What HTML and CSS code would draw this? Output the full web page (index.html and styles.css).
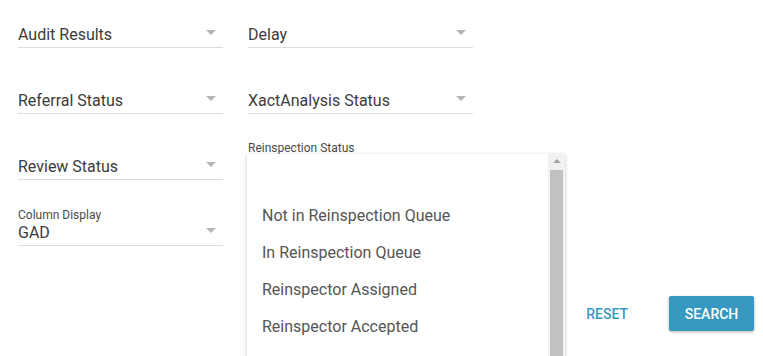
FILE: index.html
```html
<!DOCTYPE html>
<html>
<head>
    <title>Search filters</title>
    <meta charset="UTF-8">
    <meta name="viewport" content="width=device-width, initial-scale=1">
    <link rel="stylesheet" href="styles.css">
</head>
<body>
    <div class="filters">
        <div class="grid">
            <div class="field">
                <span class="value">Audit Results</span>
                <span class="caret"></span>
            </div>
            <div class="field wide">
                <span class="value">Delay</span>
                <span class="caret"></span>
            </div>
            <div class="field">
                <span class="value">Referral Status</span>
                <span class="caret"></span>
            </div>
            <div class="field wide">
                <span class="value">XactAnalysis Status</span>
                <span class="caret"></span>
            </div>
            <div class="field">
                <span class="value">Review Status</span>
                <span class="caret"></span>
            </div>
            <div class="field wide open">
                <label class="label">Reinspection Status</label>
                <div class="menu">
                    <ul class="options">
                        <li></li>
                        <li>Not in Reinspection Queue</li>
                        <li>In Reinspection Queue</li>
                        <li>Reinspector Assigned</li>
                        <li>Reinspector Accepted</li>
                    </ul>
                    <div class="scrollbar">
                        <span class="up"></span>
                        <span class="thumb"></span>
                    </div>
                </div>
            </div>
            <div class="field">
                <label class="label">Column Display</label>
                <span class="value">GAD</span>
                <span class="caret"></span>
            </div>
        </div>
        <div class="actions">
            <button class="reset">Reset</button>
            <button class="search">Search</button>
        </div>
    </div>
</body>
</html>
```

FILE: styles.css
```css
html,
body {
    margin: 0;
    height: 356px;
    overflow: hidden;
}
body {
    background: #fff;
    color: #333;
    font-family: Roboto, "Liberation Sans", sans-serif;
}
.filters {
    padding: 0 9px 0 18px;
}
.grid {
    display: grid;
    grid-template-columns: 205px 225px;
    column-gap: 25px;
    row-gap: 18px;
}
.field {
    position: relative;
    height: 48px;
    border-bottom: 1px solid #dcdcdc;
    display: flex;
    flex-direction: column;
    justify-content: flex-end;
    padding-bottom: 2px;
    box-sizing: border-box;
}
.value {
    font-size: 16px;
    line-height: 20px;
    color: #3c3c3c;
}
.label {
    font-size: 12px;
    line-height: 14px;
    color: #4a4a4a;
    margin-bottom: 1px;
}
.caret {
    position: absolute;
    right: 7px;
    bottom: 12px;
    width: 0;
    height: 0;
    border-left: 5px solid transparent;
    border-right: 5px solid transparent;
    border-top: 5px solid #b5b5b5;
}
.open {
    border-bottom: none;
    justify-content: flex-start;
    padding-top: 9px;
}
.menu {
    position: absolute;
    left: -1px;
    top: 22px;
    width: 318px;
    height: 205px;
    background: #fff;
    box-shadow: 0 1px 4px rgba(0, 0, 0, 0.22);
    display: flex;
    z-index: 2;
}
.options {
    list-style: none;
    margin: 0;
    padding: 6px 0 0;
    flex: 1;
}
.options li {
    height: 37px;
    line-height: 37px;
    padding-left: 15px;
    font-size: 16px;
    color: #555;
}
.scrollbar {
    width: 17px;
    background: #f1f1f1;
    display: flex;
    flex-direction: column;
    align-items: center;
}
.up {
    margin: 5px 0 5px;
    width: 0;
    height: 0;
    border-left: 4px solid transparent;
    border-right: 4px solid transparent;
    border-bottom: 4px solid #a3a3a3;
}
.thumb {
    width: 13px;
    flex: 1;
    margin-top: 2px;
    background: #c1c1c1;
}
.actions {
    display: flex;
    justify-content: flex-end;
    align-items: center;
    margin-top: 50px;
}
button {
    font-family: Roboto, "Liberation Sans", sans-serif;
    font-size: 14px;
    font-weight: 500;
    text-transform: uppercase;
    border: 0;
    cursor: pointer;
}
.reset {
    background: none;
    color: #3799bf;
    padding: 0 16px;
    height: 35px;
    margin-right: 25px;
}
.search {
    background: #3799bf;
    color: #fff;
    height: 35px;
    width: 85px;
    border-radius: 2px;
    box-shadow: 0 1px 3px rgba(0, 0, 0, 0.3);
}
```
